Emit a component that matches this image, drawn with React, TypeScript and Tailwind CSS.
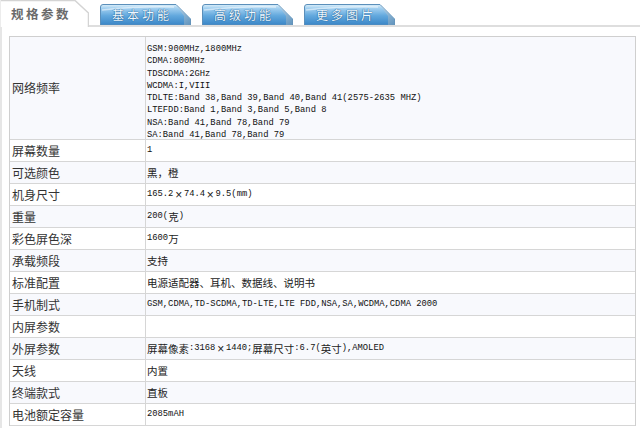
import React from "react";

const cjkRe = /([\u2E80-\u9FFF\u3000-\u303F\uFF00-\uFFEF、]+|×)/;

function Mixed({ text }: { text: string }) {
  const parts = text.split(cjkRe);
  return (
    <>
      {parts.map((p, i) =>
        p === "" || p === undefined ? null : p === "×" ? (
          <span key={i} className="inline-block w-[10.5px] text-center font-['Liberation_Sans',sans-serif] text-[12px] leading-none">
            ×
          </span>
        ) : cjkRe.test(p) ? (
          <span key={i} className="font-['Noto_Sans_CJK_SC',sans-serif] text-[10.5px]">
            {p}
          </span>
        ) : (
          <span key={i} className="font-['Liberation_Mono',monospace] text-[8.8px] text-[#111]">
            {p}
          </span>
        )
      )}
    </>
  );
}

function BlueTab({ label }: { label: string }) {
  return (
    <div className="relative w-[91px] h-[21px] flex items-center pl-[12px]">
      <svg className="absolute inset-0" width="91" height="21" viewBox="0 0 91 21">
        <defs>
          <linearGradient id="tabg" x1="0" y1="0" x2="0" y2="1">
            <stop offset="0" stopColor="#dcefFA" />
            <stop offset="0.18" stopColor="#a3d0f0" />
            <stop offset="0.55" stopColor="#62a8dd" />
            <stop offset="1" stopColor="#3a86c7" />
          </linearGradient>
          <linearGradient id="tabs" x1="0" y1="0" x2="1" y2="1">
            <stop offset="0" stopColor="#c9d9e6" />
            <stop offset="1" stopColor="#6f98b8" />
          </linearGradient>
        </defs>
        <path d="M0.5,21 L0.5,3 Q0.5,0.5 3,0.5 L76,0.5 L90.5,15 L90.5,21 Z" fill="url(#tabg)" stroke="#5b8fba" strokeWidth="1" />
        <path d="M76,0.5 L90.5,15 L90.5,21 L84,21 L84,12 Z" fill="url(#tabs)" opacity="0.7" />
        <path d="M2,6 Q40,2 74,3" stroke="#ffffff" strokeOpacity="0.5" strokeWidth="1.5" fill="none" />
      </svg>
      <span className="relative font-['Noto_Sans_CJK_SC',sans-serif] text-[12px] leading-none tracking-[3px] text-[#eef8ff] [text-shadow:0_0_1px_#1b578a,0_0_1px_#1b578a]">
        {label}
      </span>
    </div>
  );
}

const rows: [string, string][] = [
  ["屏幕数量", "1"],
  ["可选颜色", "黑，橙"],
  ["机身尺寸", "165.2×74.4×9.5(mm)"],
  ["重量", "200(克)"],
  ["彩色屏色深", "1600万"],
  ["承载频段", "支持"],
  ["标准配置", "电源适配器、耳机、数据线、说明书"],
  ["手机制式", "GSM,CDMA,TD-SCDMA,TD-LTE,LTE FDD,NSA,SA,WCDMA,CDMA 2000"],
  ["内屏参数", ""],
  ["外屏参数", "屏幕像素:3168×1440;屏幕尺寸:6.7(英寸),AMOLED"],
  ["天线", "内置"],
  ["终端款式", "直板"],
  ["电池额定容量", "2085mAH"],
];

const bands = [
  "GSM:900MHz,1800MHz",
  "CDMA:800MHz",
  "TDSCDMA:2GHz",
  "WCDMA:I,VIII",
  "TDLTE:Band 38,Band 39,Band 40,Band 41(2575-2635 MHZ)",
  "LTEFDD:Band 1,Band 3,Band 5,Band 8",
  "NSA:Band 41,Band 78,Band 79",
  "SA:Band 41,Band 78,Band 79",
];

export default function App() {
  return (
    <div className="w-[640px] h-[428px] bg-white overflow-hidden text-[#222]">
      <div className="flex h-[27px]">
        <div className="relative w-[89px] h-[27px] flex items-center pl-[11px] pt-[2px]">
          <svg className="absolute inset-0" width="89" height="27" viewBox="0 0 89 27">
            <path d="M0,0.5 L75,0.5 L88.5,13 L88.5,27" fill="none" stroke="#d4d4d4" strokeWidth="1.5" />
            <path d="M0.5,0 L0.5,27" stroke="#ececec" strokeWidth="1" />
          </svg>
          <span className="relative font-['Noto_Sans_CJK_SC',sans-serif] text-[12.5px] font-bold leading-none tracking-[2.5px] text-[#6a6a6a]">
            规格参数
          </span>
        </div>
        <div className="flex-1 flex items-end gap-[11px] pl-[11px] border-b-2 border-[#dedede]">
          <BlueTab label="基本功能" />
          <BlueTab label="高级功能" />
          <BlueTab label="更多图片" />
        </div>
      </div>
      <div className="border-l-2 border-[#e6e6e6] h-[401px] pl-[7px] pt-[9px] pr-[4px]">
        <div className="border border-[#cfcfcf] border-b-0">
          <div className="grid grid-cols-[136px_1fr] border-b border-[#d6d6d6] bg-[#f8f9fd]">
            <div className="border-r border-[#d6d6d6] flex items-center pl-[2px] h-[102px] font-['Noto_Sans_CJK_SC',sans-serif] text-[12px] text-[#333]">
              网络频率
            </div>
            <div className="pl-[1px] pt-[2px] flex flex-col">
              {bands.map((b) => (
                <div key={b} className="h-[12.3px] leading-[12.3px] whitespace-nowrap">
                  <Mixed text={b} />
                </div>
              ))}
            </div>
          </div>
          {rows.map(([k, v], i) => (
            <div
              key={k}
              className={
                "grid grid-cols-[136px_1fr] h-[22px] border-b border-[#d6d6d6] " +
                (i % 2 === 1 ? "bg-[#f8f9fd]" : "bg-white")
              }
            >
              <div className="border-r border-[#d6d6d6] flex items-center pl-[2px] font-['Noto_Sans_CJK_SC',sans-serif] text-[12px] text-[#333]">
                {k}
              </div>
              <div className="flex items-center pl-[1px] whitespace-nowrap">
                <Mixed text={v} />
              </div>
            </div>
          ))}
        </div>
      </div>
    </div>
  );
}
